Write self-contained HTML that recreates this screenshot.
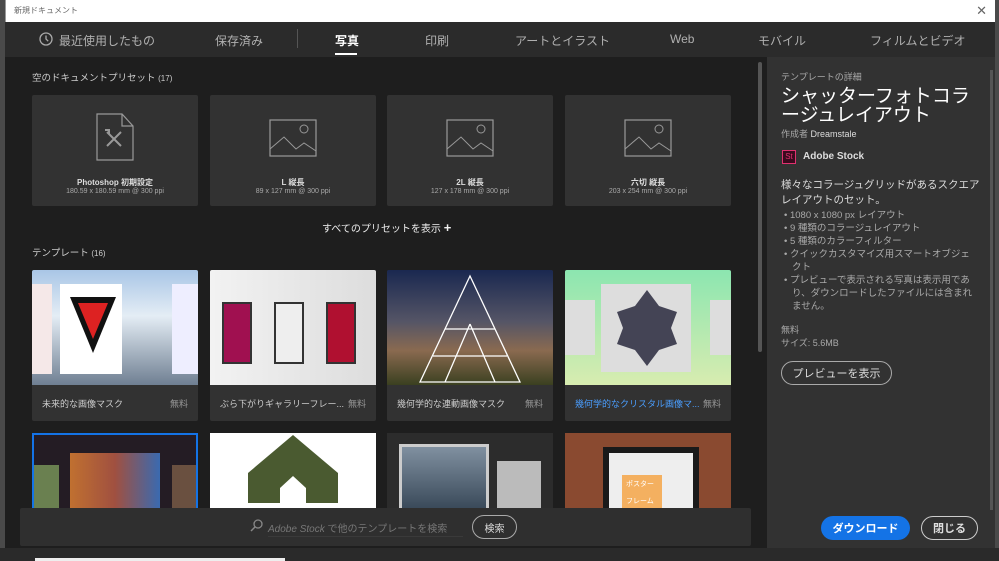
<!DOCTYPE html><html><head><meta charset="utf-8"><style>
*{margin:0;padding:0;box-sizing:border-box}
body{width:999px;height:561px;background:#4a4a4a;font-family:"Liberation Sans","Noto Sans CJK JP",sans-serif;position:relative;overflow:hidden;color:#ccc}
.abs{position:absolute}
#win{left:5px;top:0;width:990px;height:548px;background:#1e1e1e}
#title{left:5px;top:0;width:990px;height:22px;background:#fff;color:#666;font-size:8px;line-height:22px;padding-left:8px;border-left:1px solid #999}
#tabs{left:5px;top:22px;width:990px;height:35px;background:#2b2b2b}
.tab{position:absolute;top:32px;font-size:12px;color:#b0b0b0}
#main{left:5px;top:57px;width:757px;height:491px;background:#1e1e1e}
#right{left:767px;top:57px;width:228px;height:491px;background:#323232}
.card{position:absolute;top:95px;width:166px;height:111px;background:#323232;border-radius:2px;text-align:center}
.card b{position:absolute;top:82px;left:0;width:100%;font-size:8px;color:#ddd}
.card i{position:absolute;top:93px;left:0;width:100%;font-size:7px;font-style:normal;color:#aaa}
.tpl{position:absolute;top:270px;width:166px;height:151px;background:#323232;border-radius:2px;overflow:hidden}
.th{height:115px}
.lbl{position:absolute;top:127px;left:10px;font-size:9px;color:#ccc}
.free{position:absolute;top:127px;right:10px;font-size:9px;color:#999}
.t2{position:absolute;top:433px;width:166px;height:75px;overflow:hidden}
.sec{font-size:9.5px;color:#ccc}
.btn{display:flex;align-items:center;justify-content:center;border-radius:12px}
</style></head><body>
<div class="abs" id="win"></div>
<div class="abs" id="title">新規ドキュメント<span style="position:absolute;right:8px;top:0;font-size:13px;color:#666">✕</span></div>
<div class="abs" id="tabs"></div>
<svg class="abs" style="left:39px;top:32px" width="14" height="14"><circle cx="7" cy="7" r="6" fill="none" stroke="#aaa" stroke-width="1.3"/><path d="M7 3.5V7l2.2 2.2" fill="none" stroke="#aaa" stroke-width="1.3"/></svg>
<div class="tab" style="left:59px">最近使用したもの</div>
<div class="tab" style="left:215px">保存済み</div>
<div class="abs" style="left:297px;top:29px;width:1px;height:19px;background:#555"></div>
<div class="tab" style="left:335px;color:#fff;font-weight:bold">写真</div>
<div class="abs" style="left:335px;top:53px;width:22px;height:2px;background:#fff"></div>
<div class="tab" style="left:425px">印刷</div>
<div class="tab" style="left:515px">アートとイラスト</div>
<div class="tab" style="left:670px">Web</div>
<div class="tab" style="left:758px">モバイル</div>
<div class="tab" style="left:870px">フィルムとビデオ</div>
<div class="abs" id="main"></div>
<div class="abs" id="right"></div>
<div class="abs" style="left:758px;top:62px;width:4px;height:290px;background:#555;border-radius:2px"></div>
<div class="abs" style="left:990px;top:70px;width:3px;height:440px;background:#555"></div>
<div class="abs sec" style="left:32px;top:70px">空のドキュメントプリセット <span style="font-size:8px">(17)</span></div>
<div class="card" style="left:32px"><svg width="40" height="50" style="margin-top:17px" viewBox="0 0 40 50"><path d="M2 2h25l11 12v34H2z M27 2v12h11" fill="none" stroke="#999" stroke-width="1.2"/><path d="M12 20l14 14M26 20L12 34M10 18l4 0 0 4" fill="none" stroke="#999" stroke-width="2"/></svg><b>Photoshop 初期設定</b><i>180.59 x 180.59 mm @ 300 ppi</i></div>
<div class="card" style="left:210px"><svg width="48" height="38" style="margin-top:24px"><rect x="1" y="1" width="46" height="36" fill="none" stroke="#999" stroke-width="1.2"/><circle cx="35" cy="10" r="4" fill="none" stroke="#999"/><path d="M1 30l14-12 12 12 8-6 12 8" fill="none" stroke="#999"/></svg><b>L 縦長</b><i>89 x 127 mm @ 300 ppi</i></div>
<div class="card" style="left:387px"><svg width="48" height="38" style="margin-top:24px"><rect x="1" y="1" width="46" height="36" fill="none" stroke="#999" stroke-width="1.2"/><circle cx="35" cy="10" r="4" fill="none" stroke="#999"/><path d="M1 30l14-12 12 12 8-6 12 8" fill="none" stroke="#999"/></svg><b>2L 縦長</b><i>127 x 178 mm @ 300 ppi</i></div>
<div class="card" style="left:565px"><svg width="48" height="38" style="margin-top:24px"><rect x="1" y="1" width="46" height="36" fill="none" stroke="#999" stroke-width="1.2"/><circle cx="35" cy="10" r="4" fill="none" stroke="#999"/><path d="M1 30l14-12 12 12 8-6 12 8" fill="none" stroke="#999"/></svg><b>六切 縦長</b><i>203 x 254 mm @ 300 ppi</i></div>
<div class="abs" style="left:322px;top:220px;font-size:10px;color:#eee">すべてのプリセットを表示 <b style="font-size:13px">+</b></div>
<div class="abs sec" style="left:32px;top:245px">テンプレート <span style="font-size:8px">(16)</span></div>

<div class="tpl" style="left:32px"><div class="th" style="background:linear-gradient(#a9c6e6,#e4edf5 40%,#6f7f92)"><div style="position:absolute;left:28px;top:14px;width:62px;height:90px;background:#fff"></div><svg style="position:absolute;left:36px;top:25px" width="50" height="60"><path d="M2 2h46L25 58z" fill="#111"/><path d="M10 8h30L25 44z" fill="#d22"/></svg><div style="position:absolute;left:0;top:14px;width:20px;height:90px;background:#f5e8e8"></div><div style="position:absolute;left:140px;top:14px;width:26px;height:90px;background:#eef"></div></div><div class="lbl">未来的な画像マスク</div><div class="free">無料</div></div>
<div class="tpl" style="left:210px"><div class="th" style="background:linear-gradient(90deg,#f2f2f2,#ddd)"><div style="position:absolute;left:12px;top:32px;width:30px;height:62px;background:#a01050;border:2px solid #333"></div><div style="position:absolute;left:64px;top:32px;width:30px;height:62px;background:#eee;border:2px solid #333"></div><div style="position:absolute;left:116px;top:32px;width:30px;height:62px;background:#b01030;border:2px solid #333"></div></div><div class="lbl">ぶら下がりギャラリーフレー...</div><div class="free">無料</div></div>
<div class="tpl" style="left:387px"><div class="th" style="background:linear-gradient(#1a2850,#556 45%,#8a6a50 70%,#3a4020)"><svg style="position:absolute;left:28px;top:4px" width="110" height="110"><path d="M55 2L5 108h100zM30 55h50M55 50L30 108M55 50l25 58M18 82h74" fill="none" stroke="#fff" stroke-width="1.3"/></svg></div><div class="lbl">幾何学的な連動画像マスク</div><div class="free">無料</div></div>
<div class="tpl" style="left:565px"><div class="th" style="background:linear-gradient(#8ce6b0,#d8ecb0)"><div style="position:absolute;left:36px;top:14px;width:90px;height:88px;background:#ddd"></div><svg style="position:absolute;left:50px;top:18px" width="64" height="80"><path d="M32 2l12 16 18 6-6 16 6 16-18 6-12 16-12-16-18-6 6-16-6-16 18-6z" fill="#445"/></svg><div style="position:absolute;left:0;top:30px;width:30px;height:55px;background:#ddd"></div><div style="position:absolute;left:145px;top:30px;width:21px;height:55px;background:#ddd"></div></div><div class="lbl" style="color:#4a9eff">幾何学的なクリスタル画像マ...</div><div class="free">無料</div></div>

<div class="t2" style="left:32px;background:#241c24;border:2px solid #1473e6;border-bottom:none"><div style="position:absolute;left:36px;top:18px;width:90px;height:60px;background:linear-gradient(90deg,#c07030,#a05040,#3a6ab0)"></div><div style="position:absolute;left:0;top:30px;width:25px;height:50px;background:#6a8050"></div><div style="position:absolute;left:138px;top:30px;width:26px;height:50px;background:#6a5040"></div></div>
<div class="t2" style="left:210px;background:#fff"><svg width="166" height="75"><path d="M38 70V40L83 2l45 38v30z" fill="#4a5a30"/><path d="M70 70V55l13-12 13 12v15z" fill="#fff"/></svg></div>
<div class="t2" style="left:387px;background:#2c2c2c"><div style="position:absolute;left:12px;top:11px;width:90px;height:70px;background:#ccc"></div><div style="position:absolute;left:15px;top:14px;width:84px;height:70px;background:linear-gradient(#8090a0,#304050)"></div><div style="position:absolute;left:110px;top:28px;width:44px;height:50px;background:#bbb"></div></div>
<div class="t2" style="left:565px;background:#8a4a30"><div style="position:absolute;left:38px;top:14px;width:96px;height:70px;background:#1a1a1a"></div><div style="position:absolute;left:44px;top:20px;width:84px;height:60px;background:#eee"></div><div style="position:absolute;left:57px;top:42px;width:40px;height:40px;background:#f4b060;color:#fff;font-size:7px;padding:4px">ポスター<br><br>フレーム</div></div>

<div class="abs" style="left:20px;top:508px;width:731px;height:38px;background:#2f2f2f;border-radius:2px"></div>
<svg class="abs" style="left:250px;top:519px" width="13" height="13"><circle cx="8" cy="5" r="4" fill="none" stroke="#888" stroke-width="1.3"/><path d="M5 8L1 12" stroke="#888" stroke-width="1.5"/></svg>
<div class="abs" style="left:268px;top:520px;font-size:10px;color:#777"><i>Adobe Stock</i> で他のテンプレートを検索</div>
<div class="abs" style="left:268px;top:536px;width:195px;height:1px;background:#3a3a3a"></div>
<div class="abs btn" style="left:472px;top:515px;width:45px;height:24px;border:1.5px solid #aaa;font-size:10px;color:#ddd">検索</div>

<div class="abs" style="left:781px;top:70px;font-size:9px;color:#aaa">テンプレートの詳細</div>
<div class="abs" style="left:781px;top:87px;font-size:19px;line-height:19px;color:#fff;width:200px">シャッターフォトコラージュレイアウト</div>
<div class="abs" style="left:781px;top:127px;font-size:9px;color:#aaa">作成者 <span style="color:#ddd">Dreamstale</span></div>
<div class="abs" style="left:782px;top:150px;width:14px;height:14px;background:#3a0a1e;border:1px solid #e0316f;font-size:8px;color:#e0316f;text-align:center;line-height:12px">St</div>
<div class="abs" style="left:803px;top:151px;font-size:10px;color:#ddd;font-weight:bold">Adobe Stock</div>
<div class="abs" style="left:781px;top:178px;font-size:10.5px;line-height:15px;color:#ddd;width:203px">様々なコラージュグリッドがあるスクエアレイアウトのセット。</div>
<div class="abs" style="left:784px;top:209px;font-size:9.5px;line-height:13px;color:#aaa;width:190px">
<div>• 1080 x 1080 px レイアウト</div><div>• 9 種類のコラージュレイアウト</div><div>• 5 種類のカラーフィルター</div><div style="padding-left:8px;text-indent:-8px">• クイックカスタマイズ用スマートオブジェクト</div><div style="padding-left:8px;text-indent:-8px">• プレビューで表示される写真は表示用であり、ダウンロードしたファイルには含まれません。</div></div>
<div class="abs" style="left:781px;top:324px;font-size:9px;line-height:13px;color:#aaa">無料<br>サイズ: 5.6MB</div>
<div class="abs btn" style="left:781px;top:361px;width:111px;height:24px;border:1.5px solid #aaa;font-size:11px;color:#ddd">プレビューを表示</div>
<div class="abs btn" style="left:821px;top:516px;width:89px;height:24px;background:#1473e6;font-size:11px;color:#fff;font-weight:bold">ダウンロード</div>
<div class="abs btn" style="left:921px;top:516px;width:57px;height:24px;border:1.5px solid #ccc;font-size:11px;color:#ddd;font-weight:bold">閉じる</div>
<div class="abs" style="left:0;top:548px;width:999px;height:13px;background:#2a2a2a"></div>
<div class="abs" style="left:35px;top:558px;width:250px;height:3px;background:#eee"></div>
</body></html>
